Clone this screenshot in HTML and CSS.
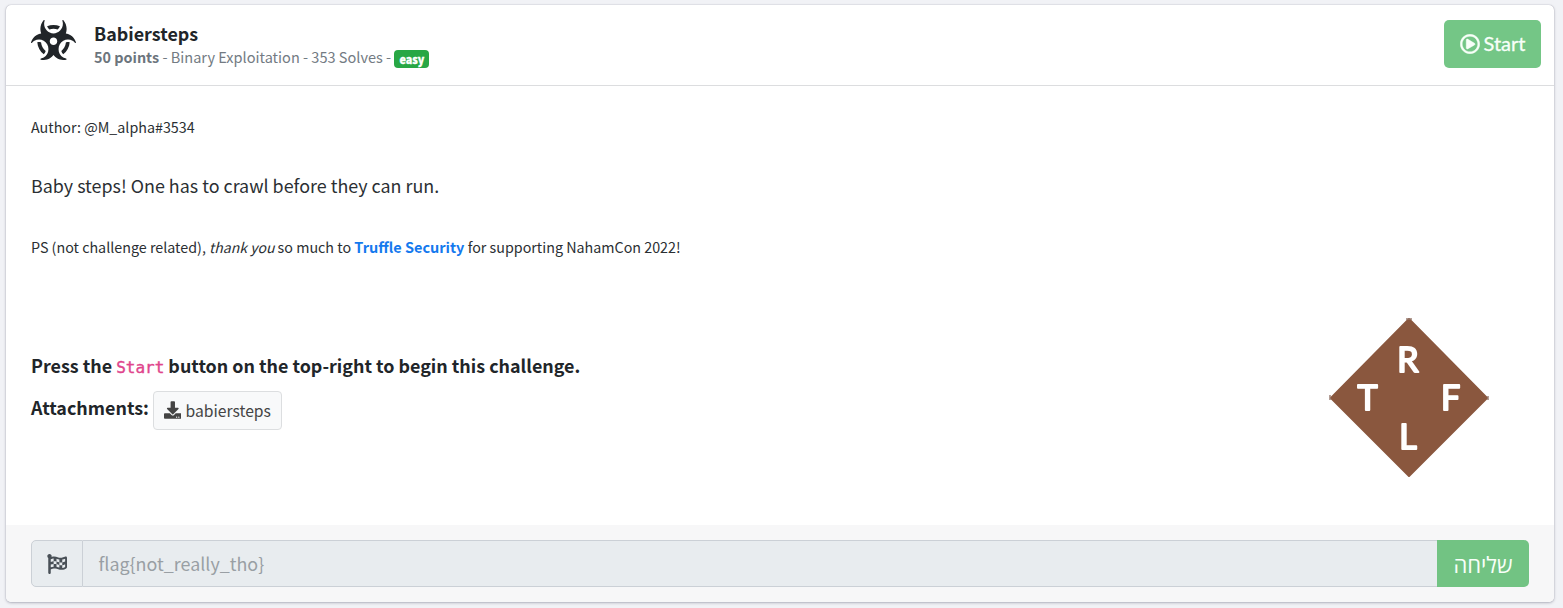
FILE: index.html
```html
<!DOCTYPE html>
<html lang="en">
<head>
<meta charset="utf-8">
<title>Babiersteps</title>
<link rel="stylesheet" href="styles.css">
</head>
<body>
<main class="card">
  <header class="card-header">
    <svg class="icon-hazard" viewBox="0 0 576 512" fill="currentColor"><path d="M287.9 112c18.6 0 36.2 3.8 52.8 9.6 13.3-10.3 23.6-24.3 29.5-40.7-25.2-10.9-53-17-82.2-17-29.1 0-56.9 6-82.1 16.9 5.9 16.4 16.2 30.4 29.5 40.7 16.5-5.7 34-9.5 52.5-9.5zM163.6 438.7c12-11.8 20.4-26.4 24.5-42.4-32.9-26.4-54.8-65.3-58.9-109.6-8.5-2.8-17.2-4.6-26.4-4.6-7.6 0-15.2 1-22.5 3.1 4.1 62.8 35.8 118 83.3 153.5zm224.2-42.6c4.1 16 12.5 30.7 24.5 42.5 47.4-35.5 79.1-90.7 83-153.5-7.2-2-14.7-3-22.2-3-9.2 0-18 1.9-26.6 4.7-4.1 44.2-26 82.9-58.7 109.3zm113.5-205c-17.6-10.4-36.3-16.6-55.3-19.9 6-17.7 10-36.4 10-56.2 0-41-14.5-80.8-41-112.2-2.5-3-6.6-3.7-10-1.8-3.3 1.9-4.8 6-3.6 9.7 4.5 13.8 6.6 26.3 6.6 38.5 0 67.8-53.8 122.9-120 122.9S168 117 168 49.2c0-12.1 2.2-24.7 6.6-38.5 1.2-3.7-.3-7.8-3.6-9.7-3.4-1.9-7.5-1.2-10 1.8C134.6 34.2 120 74 120 115c0 19.8 3.9 38.5 10 56.2-18.9 3.3-37.7 9.5-55.3 19.9-34.6 20.5-61 53.3-74.3 92.4-1.3 3.7.2 7.7 3.5 9.8 3.3 2 7.5 1.3 10-1.6 9.4-10.8 19-19.1 29.2-25.1 57.3-33.9 130.8-13.7 163.9 45 33.1 58.7 13.4 134-43.9 167.9-10.2 6.1-22 10.4-35.8 13.4-3.7.8-6.4 4.2-6.4 8.1.1 4 2.7 7.3 6.5 8 39.7 7.8 80.6.8 115.2-19.7 18-10.6 32.9-24.5 45.3-40.1 12.4 15.6 27.3 29.5 45.3 40.1 34.6 20.5 75.5 27.5 115.2 19.7 3.8-.7 6.4-4 6.5-8 0-3.9-2.6-7.3-6.4-8.1-13.9-2.9-25.6-7.3-35.8-13.4-57.3-33.9-77-109.2-43.9-167.9s106.6-78.9 163.9-45c10.2 6.1 19.8 14.3 29.2 25.1 2.5 2.9 6.7 3.6 10 1.6s4.8-6.1 3.5-9.8c-13.1-39.1-39.5-72-74.1-92.4zm-213.4 129c-26.5 0-48-21.5-48-48s21.5-48 48-48 48 21.5 48 48-21.5 48-48 48z"/></svg>
    <div class="heading">
      <div class="title">Babiersteps</div>
      <div class="meta"><b>50 points</b> - Binary Exploitation - 353 Solves - <span class="badge">easy</span></div>
    </div>
    <button class="btn-start"><svg viewBox="0 0 512 512" fill="currentColor"><path d="M371.7 238l-176-107c-15.8-8.8-35.7 2.5-35.7 21v208c0 18.4 19.8 29.8 35.7 21l176-101c16.4-9.1 16.4-32.8 0-42zM504 256C504 119 393 8 256 8S8 119 8 256s111 248 248 248 248-111 248-248zm-448 0c0-110.5 89.5-200 200-200s200 89.5 200 200-89.5 200-200 200S56 366.5 56 256z"/></svg><span>Start</span></button>
  </header>
  <section class="card-body">
    <div class="text">
      <p class="small">Author: @M_alpha#3534</p>
      <p class="lead">Baby steps! One has to crawl before they can run.</p>
      <p class="small ps">PS (not challenge related), <i>thank you</i> so much to <a>Truffle Security</a> for supporting NahamCon 2022!</p>
      <p class="press">Press the <code>Start</code> button on the top-right to begin this challenge.</p>
      <div class="attachments"><b>Attachments:</b>
        <a class="file"><svg viewBox="0 0 512 512" fill="currentColor"><path d="M216 0h80c13.3 0 24 10.7 24 24v168h87.7c17.8 0 26.7 21.5 14.1 34.1L269.7 378.3c-7.5 7.5-19.8 7.5-27.3 0L90.1 226.1c-12.6-12.6-3.7-34.1 14.1-34.1H192V24c0-13.3 10.7-24 24-24zm296 376v112c0 13.3-10.7 24-24 24H24c-13.3 0-24-10.7-24-24V376c0-13.3 10.7-24 24-24h146.7l49 49c20.1 20.1 52.5 20.1 72.6 0l49-49H488c13.3 0 24 10.7 24 24zm-124 88c0-11-9-20-20-20s-20 9-20 20 9 20 20 20 20-9 20-20zm64 0c0-11-9-20-20-20s-20 9-20 20 9 20 20 20 20-9 20-20z"/></svg><span>babiersteps</span></a>
      </div>
    </div>
    <svg class="logo" viewBox="0 0 160 160">
      <path d="M80 1 158 80 80 158 2 80Z" fill="#8a573e" stroke="#8a573e" stroke-width="2" stroke-linejoin="round"/>
      <path d="M77 1h6M1 77v5M159 78v4" stroke="#94766b" stroke-opacity=".7" stroke-width="2"/>
      <g class="logo-letters"><text x="79" y="53.500">R</text><text x="38.5" y="91.500">T</text><text x="121.500" y="91.500">F</text><text x="79" y="130.500">L</text></g>
    </svg>
  </section>
  <footer class="card-footer">
    <div class="flag"><svg viewBox="0 0 512 512" fill="currentColor"><path d="M243.2 189.9V258c26.1 5.9 49.3 15.6 73.6 22.3v-68.2c-26-5.8-49.4-15.5-73.6-22.2zm223.3-123c-34.3 15.9-76.5 31.9-117 31.9C296 98.8 251.7 64 184.3 64c-25 0-47.3 4.4-68 12 2.8-7.3 4.1-15.2 3.6-23.6C118.1 24 94.8 1.2 66.3 0 34.3-1.3 8 24.3 8 56c0 19 9.5 35.8 24 45.9V488c0 13.3 10.7 24 24 24h16c13.3 0 24-10.7 24-24v-94.4c28.3-12.1 63.6-22.1 114.4-22.1 53.6 0 97.8 34.8 165.2 34.8 48.2 0 86.7-16.3 122.5-40.9 8.7-6 13.8-15.8 13.8-26.4V95.9c.1-23.3-24.2-38.8-45.4-29zM169.6 325.5c-25.8 2.7-50 8.2-73.6 16.6v-70.5c26.2-9.3 47.5-15 73.6-17.4v71.3zM464 191c-23.6 9.8-46.3 19.5-73.6 23.9V286c24.8-3.4 51.4-11.8 73.6-26v70.5c-25.1 16.1-48.5 24.7-73.6 27.1V286c-27 3.7-47.9 1.5-73.6-5.6v67.4c-23.9-7.4-47.3-16.7-73.6-21.3V258c-19.7-4.4-40.8-6.8-73.6-3.8v-70c-22.4 3.1-44.6 10.2-73.6 20.9v-70.5c33.2-12.2 50.1-19.8 73.6-22v71.6c27-3.7 48.4-1.3 73.6 5.7v-67.4c23.7 7.4 47.2 16.7 73.6 21.3v68.4c23.7 5.3 47.6 6.9 73.6 2.7V143c27-4.8 52.3-13.6 73.6-22.500z"/></svg></div>
    <div class="field">flag{not_really_tho}</div>
    <button class="btn-submit" dir="rtl" lang="he">שליחה</button>
  </footer>
</main>
</body>
</html>
```
FILE: styles.css
```css
* { box-sizing: border-box; }
body {
  margin: 0;
  padding: 5px 9px 6px 6px;
  height: 608px;
  background: #f1f2f6;
  color: #212529;
  font-family: "Noto Sans CJK SC", "Open Sans", sans-serif;
  overflow: hidden;
}
button { border: 0; padding: 0; font: inherit; }
p { margin: 0; }
.card {
  display: flex;
  flex-direction: column;
  height: 597px;
  background: #fff;
  border-radius: 5px;
  box-shadow: 0 0 1px rgba(0,0,40,.35), 0 1px 3px rgba(0,0,40,.25);
  overflow: hidden;
}
.card-header {
  display: flex;
  align-items: flex-start;
  height: 81px;
  padding: 15px 13px 0 25px;
  border-bottom: 1px solid #dcdddf;
}
.icon-hazard { width: 45px; height: 40px; }
.heading { flex: 1; padding-left: 18px; white-space: nowrap; }
.title { font-size: 17.9px; line-height: 24px; height: 25px; font-weight: 700; padding-top: 1px; }
.meta { font-size: 14.55px; line-height: 24px; color: #737b83; }
.meta b { font-size: 14.4px; color: #6c757d; }
.badge {
  display: inline-block;
  height: 18px;
  margin-bottom: -1px;
  padding: 0 5px;
  border-radius: 4px;
  background: #28a745;
  color: #fff;
  font-size: 10.8px;
  line-height: 18px;
  font-weight: 900;
  vertical-align: -1px;
  position: static;
  -webkit-text-stroke: .3px #fff;
}
.btn-start {
  display: flex;
  align-items: center;
  justify-content: center;
  gap: 4px;
  width: 97px;
  height: 48px;
  border-radius: 5px;
  background: #74c686;
  color: #f8fff9;
  font-family: Lato, sans-serif;
  font-size: 20px;
}
.btn-start span { -webkit-text-stroke: .3px #f8fff9; padding-bottom: 2px; }
.btn-start svg { width: 20px; height: 20px; stroke: currentColor; stroke-width: 12; margin-bottom: 1px; }
.card-body {
  display: flex;
  justify-content: space-between;
  height: 439px;
  padding: 29px 65px 0 25px;
}
.text { white-space: nowrap; }
.small { font-size: 14.3px; line-height: 24px; color: #2b2f33; }
.lead { font-size: 17.9px; line-height: 30px; margin: 31px 0 35px; color: #2b2f33; }
.small i { font-size: 14px; }
.small a { color: #1479ee; font-weight: 700; font-size: 14.5px; }
.press { font-size: 17.9px; line-height: 30px; font-weight: 700; margin-top: 91px; }
.press code { font: 16px/1 "DejaVu Sans Mono", monospace; color: #e0448c; -webkit-text-stroke: .4px #e0448c; }
.attachments { display: flex; align-items: flex-start; gap: 4px; margin-top: 11px; font-size: 17.9px; line-height: 32px; }
.file {
  display: flex;
  align-items: center;
  gap: 4px;
  width: 129px;
  height: 39px;
  padding: 0 10px;
  border: 1px solid #dcdee0;
  border-radius: 4px;
  background: #f8f9fa;
  color: #444;
  font-size: 15.7px;
}
.file svg { width: 18px; height: 18px; margin-bottom: 2px; }
.logo { width: 160px; height: 160px; margin-top: 203px; filter: blur(.6px); }
.logo-letters {
  fill: #fff;
  stroke: #fff;
  stroke-width: 2;
  stroke-linejoin: round;
  font: 400 34px Lato, sans-serif;
  text-anchor: middle;
}
.card-footer {
  display: flex;
  height: 77px;
  padding: 15px 25px 15px;
  background: #f7f7f8;
}
.flag, .field { border: 1px solid #cbd0d6; background: #e8ecef; height: 47px; }
.flag {
  display: flex;
  align-items: center;
  justify-content: center;
  width: 52px;
  border-radius: 5px 0 0 5px;
  color: #495057;
}
.flag svg { width: 20px; height: 20px; }
.field {
  flex: 1;
  border-width: 1px 0;
  padding-left: 15.5px;
  font-size: 17.9px;
  line-height: 45px;
  color: #999fa4;
}
.btn-submit {
  width: 92px;
  height: 47px;
  border-radius: 0 5px 5px 0;
  background: #72c383;
  color: #f8fff9;
  font-family: "Open Sans", "DejaVu Sans", sans-serif;
  font-size: 22px;
}
```
